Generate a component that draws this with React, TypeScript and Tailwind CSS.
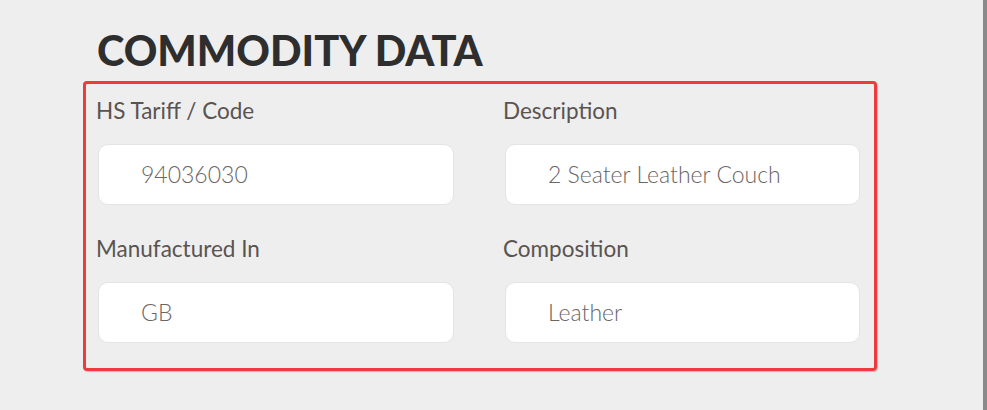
import React from "react";

const fields = [
  { label: "HS Tariff / Code", value: "94036030" },
  { label: "Description", value: "2 Seater Leather Couch" },
  { label: "Manufactured In", value: "GB" },
  { label: "Composition", value: "Leather" },
];

export default function App() {
  return (
    <div className="flex h-[410px] w-[987px] overflow-hidden bg-[#eeeeee]" style={{ fontFamily: "Lato, 'Noto Sans', sans-serif" }}>
      <div className="flex-1 pl-[83px] pt-[26px]">
        <h1 className="h-[48px] pl-[14px] text-[41.5px] font-black leading-[48px] text-[#2e2e2e]">
          COMMODITY DATA
        </h1>
        <div className="mt-[7px] w-[794px] rounded-[4px] border-[3px] border-[#ee3a3f] pl-[12px] pr-[14px] pt-[12px] pb-[25px] shadow-[1px_1px_1px_rgba(0,0,0,0.2)]">
          <div className="grid grid-cols-[356px_355px] gap-x-[51px] gap-y-[29px]">
            {fields.map((f) => (
              <div key={f.label} className="flex flex-col">
                <div className="-ml-[2px] h-[30px] text-[22.5px] leading-[30px] text-[#5a5451]">{f.label}</div>
                <div className="mt-[18px] flex h-[61px] items-center rounded-[10px] border border-[#e4e4e4] bg-white pl-[42px] text-[23px] font-light text-[#6a6664]">
                  {f.value}
                </div>
              </div>
            ))}
          </div>
        </div>
      </div>
      <div className="w-[4px] bg-[#8a8a8a]" />
    </div>
  );
}
